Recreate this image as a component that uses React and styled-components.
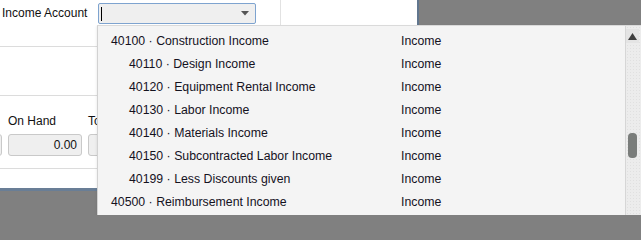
import React from "react";
import styled, { createGlobalStyle } from "styled-components";

const GlobalStyle = createGlobalStyle`
  html, body {
    margin: 0;
    padding: 0;
    background: #808080;
  }
  body {
    font-family: "Liberation Sans", Arial, sans-serif;
    font-size: 12px;
    color: #111;
  }
`;

const accounts = [
  { number: "40100", name: "Construction Income", sub: false },
  { number: "40110", name: "Design Income", sub: true },
  { number: "40120", name: "Equipment Rental Income", sub: true },
  { number: "40130", name: "Labor Income", sub: true },
  { number: "40140", name: "Materials Income", sub: true },
  { number: "40150", name: "Subcontracted Labor Income", sub: true },
  { number: "40199", name: "Less Discounts given", sub: true },
  { number: "40500", name: "Reimbursement Income", sub: false },
];

const StyledScreen = styled.div`
  position: relative;
  width: 641px;
  height: 215px;
  overflow: hidden;
  background: #808080;
`;

const StyledWindow = styled.div`
  width: 419px;
  height: 191px;
  box-sizing: border-box;
  background: #fff;
  border-right: 2px solid #61768e;
  border-bottom: 3px solid #697e96;
  display: flex;
  flex-direction: column;
`;

const StyledSection = styled.div`
  height: ${(p) => p.$height}px;
  box-sizing: border-box;
  border-bottom: ${(p) => (p.$ruled ? "1px solid #dcdcdc" : "none")};
  padding-top: ${(p) => p.$padTop || 0}px;
  flex-shrink: 0;
`;

const StyledAccountRow = styled.div`
  display: flex;
  align-items: flex-start;
  height: 25px;
  padding-left: 2px;
`;

const StyledLabel = styled.span`
  display: block;
  width: ${(p) => (p.$width ? `${p.$width}px` : "auto")};
  line-height: 14px;
  padding-top: ${(p) => p.$padTop || 0}px;
  color: #111;
  white-space: nowrap;
`;

const StyledCombo = styled.div`
  width: 158px;
  height: 21px;
  margin-top: 3px;
  box-sizing: border-box;
  border: 1px solid #7ea3cf;
  border-radius: 2px;
  background: #efefef;
  display: flex;
  align-items: center;
  padding: 0 5px 0 2px;
`;

const StyledCaret = styled.span`
  width: 1px;
  height: 14px;
  background: #000;
`;

const StyledComboArrow = styled.svg`
  margin-left: auto;
  margin-right: 1px;
`;

const StyledDivider = styled.div`
  width: 1px;
  height: 25px;
  margin-left: 24px;
  background: #e2e2e2;
`;

const StyledFieldRow = styled.div`
  display: flex;
  gap: 6px;
  width: 169px;
  margin-left: -72px;
  overflow: hidden;
`;

const StyledFieldGroup = styled.div`
  display: flex;
  flex-direction: column;
  gap: 6px;
  width: 74px;
  flex-shrink: 0;
`;

const StyledField = styled.div`
  height: 22px;
  box-sizing: border-box;
  border: 1px solid #c9c9c9;
  border-radius: 3px;
  background: #efefef;
  text-align: right;
  line-height: 20px;
  padding-right: 4px;
  color: #111;
`;

const StyledDropdown = styled.div`
  position: absolute;
  left: 97px;
  top: 25px;
  right: 0;
  bottom: 0;
  display: flex;
  background: #f4f4f4;
  border-left: 1px solid #d2d2d2;
  border-top: 1px solid #dadada;
  box-shadow: -1px 1px 2px rgba(0, 0, 0, 0.06);
`;

const StyledList = styled.div`
  flex: 1;
  padding-top: 3px;
  overflow: hidden;
`;

const StyledOption = styled.div`
  display: flex;
  align-items: center;
  height: 23px;
  padding-left: 13px;
  color: #14121e;
  font-size: 12.3px;
  white-space: nowrap;
`;

const StyledOptionName = styled.span`
  width: 290px;
  box-sizing: border-box;
  padding-left: ${(p) => (p.$sub ? 18 : 0)}px;
`;

const StyledScrollbar = styled.div`
  width: 16px;
  box-sizing: border-box;
  border-left: 1px solid #d6d6d6;
  padding-top: 3px;
  background-color: #ececec;
  background-image: radial-gradient(#e0e0e0 0.6px, transparent 0.7px);
  background-size: 3px 3px;
  display: flex;
  flex-direction: column;
`;

const StyledScrollButton = styled.div`
  height: 14px;
  margin-right: 2px;
  background: #e4e4e4;
  display: flex;
  align-items: center;
  justify-content: center;
`;

const StyledThumb = styled.div`
  width: 9px;
  height: 25px;
  margin: 90px 0 0 2px;
  border-radius: 4px;
  background: #7a7d7b;
`;

export default function App() {
  return (
    <>
      <GlobalStyle />
      <StyledScreen>
        <StyledWindow>
          <StyledSection $height={47} $ruled>
            <StyledAccountRow>
              <StyledLabel $width={96} $padTop={6}>
                Income Account
              </StyledLabel>
              <StyledCombo>
                <StyledCaret />
                <StyledComboArrow width="8" height="5" viewBox="0 0 8 5">
                  <polygon points="0,0 8,0 4,4.5" fill="#555" />
                </StyledComboArrow>
              </StyledCombo>
              <StyledDivider />
            </StyledAccountRow>
          </StyledSection>
          <StyledSection $height={49} $ruled />
          <StyledSection $height={73} $ruled $padTop={18}>
            <StyledFieldRow>
              <StyledFieldGroup>
                <StyledLabel>&nbsp;</StyledLabel>
                <StyledField />
              </StyledFieldGroup>
              <StyledFieldGroup>
                <StyledLabel>On Hand</StyledLabel>
                <StyledField>0.00</StyledField>
              </StyledFieldGroup>
              <StyledFieldGroup>
                <StyledLabel>To</StyledLabel>
                <StyledField />
              </StyledFieldGroup>
            </StyledFieldRow>
          </StyledSection>
        </StyledWindow>

        <StyledDropdown>
          <StyledList>
            {accounts.map((a) => (
              <StyledOption key={a.number}>
                <StyledOptionName $sub={a.sub}>
                  {a.number} · {a.name}
                </StyledOptionName>
                <span>Income</span>
              </StyledOption>
            ))}
          </StyledList>
          <StyledScrollbar>
            <StyledScrollButton>
              <svg width="9" height="7" viewBox="0 0 9 7">
                <polygon points="4.5,0 9,7 0,7" fill="#3e3e3e" />
              </svg>
            </StyledScrollButton>
            <StyledThumb />
          </StyledScrollbar>
        </StyledDropdown>
      </StyledScreen>
    </>
  );
}
